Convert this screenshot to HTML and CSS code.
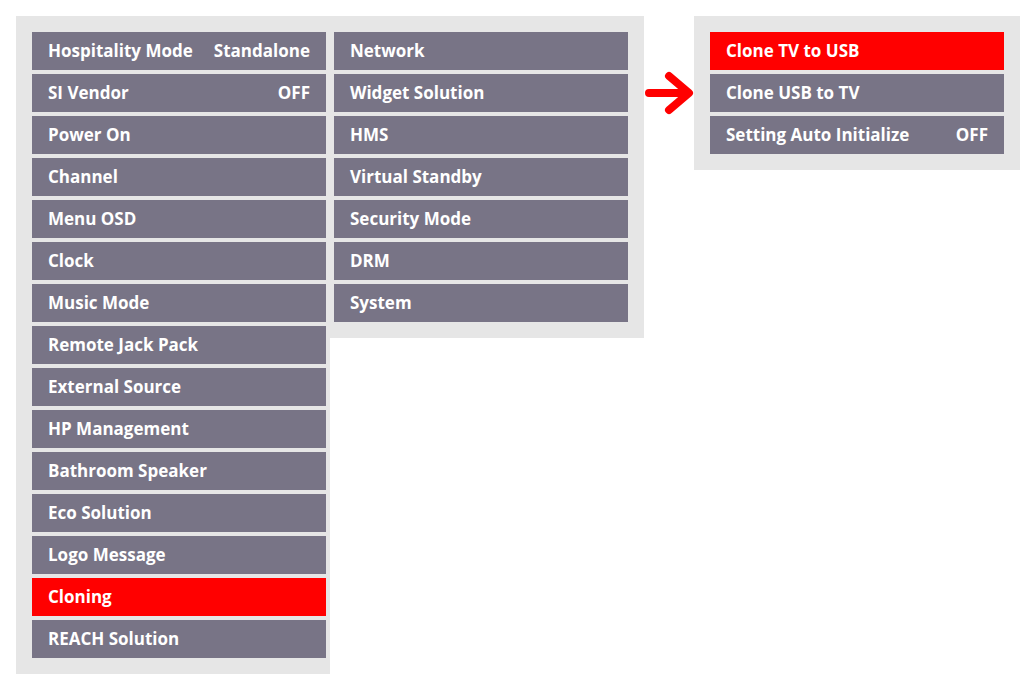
FILE: index.html
```html
<!DOCTYPE html>
<html lang="en">
  <head>
    <meta charset="UTF-8" />
    <meta name="viewport" content="width=device-width, initial-scale=1.0" />
    <title>Hospitality Menu</title>
    <link rel="stylesheet" href="styles.css">
  </head>
  <body>
    <div class="menu-row">
      <div class="panel panel-main">
        <div class="menu-item"><span>Hospitality Mode</span><span>Standalone</span></div>
        <div class="menu-item"><span>SI Vendor</span><span>OFF</span></div>
        <div class="menu-item"><span>Power On</span></div>
        <div class="menu-item"><span>Channel</span></div>
        <div class="menu-item"><span>Menu OSD</span></div>
        <div class="menu-item"><span>Clock</span></div>
        <div class="menu-item"><span>Music Mode</span></div>
        <div class="menu-item"><span>Remote Jack Pack</span></div>
        <div class="menu-item"><span>External Source</span></div>
        <div class="menu-item"><span>HP Management</span></div>
        <div class="menu-item"><span>Bathroom Speaker</span></div>
        <div class="menu-item"><span>Eco Solution</span></div>
        <div class="menu-item"><span>Logo Message</span></div>
        <div class="menu-item active"><span>Cloning</span></div>
        <div class="menu-item"><span>REACH Solution</span></div>
      </div>
      <div class="panel panel-more">
        <div class="menu-item"><span>Network</span></div>
        <div class="menu-item"><span>Widget Solution</span></div>
        <div class="menu-item"><span>HMS</span></div>
        <div class="menu-item"><span>Virtual Standby</span></div>
        <div class="menu-item"><span>Security Mode</span></div>
        <div class="menu-item"><span>DRM</span></div>
        <div class="menu-item"><span>System</span></div>
      </div>
      <svg class="arrow" width="50" height="50" viewBox="0 0 50 50">
        <path d="M5 25 H44 M25 8 L45 25 L25 42" fill="none" stroke="#ff0000" stroke-width="8" stroke-linecap="round" stroke-linejoin="round" />
      </svg>
      <div class="panel panel-sub">
        <div class="menu-item active"><span>Clone TV to USB</span></div>
        <div class="menu-item"><span>Clone USB to TV</span></div>
        <div class="menu-item"><span>Setting Auto Initialize</span><span>OFF</span></div>
      </div>
    </div>
  </body>
</html>
```

FILE: styles.css
```css
body {
  font-family: "Open Sans", Lato, sans-serif;
  margin: 0;
  padding: 16px;
  background: #ffffff;
}

.menu-row {
  display: flex;
  align-items: flex-start;
}

.panel {
  background: #e6e6e6;
  display: flex;
  flex-direction: column;
  gap: 4px;
  padding: 16px;
}

.panel-main {
  padding-right: 4px;
}

.panel-more {
  padding-left: 4px;
}

.menu-item {
  width: 294px;
  height: 38px;
  box-sizing: border-box;
  padding: 0 16px 2px;
  background: #787486;
  color: white;
  font-size: 17px;
  font-weight: bold;
  display: flex;
  align-items: center;
  justify-content: space-between;
}

.menu-item.active {
  background: #ff0000;
}

.arrow {
  margin-top: 52px;
}
```
